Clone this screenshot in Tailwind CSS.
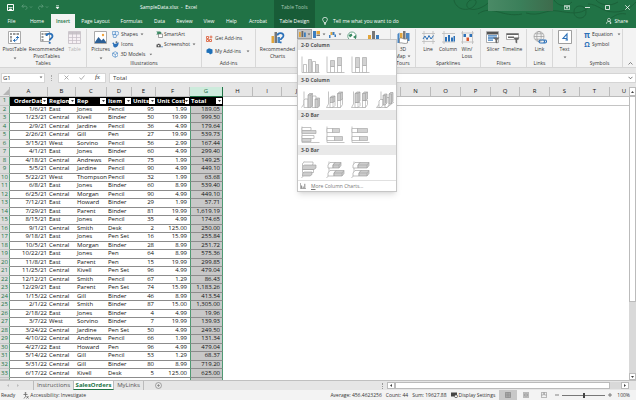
<!DOCTYPE html>
<html lang="en">
<head>
<meta charset="utf-8">
<title>SampleData.xlsx - Excel</title>
<script src="https://cdn.jsdelivr.net/npm/@tailwindcss/browser@4"></script>
</head>
<body class="h-screen overflow-hidden flex flex-col bg-[#e6e6e6] font-['Open_Sans',sans-serif] text-[5px] leading-[7px] text-[#333]">

<svg class="hidden" aria-hidden="true">
  <symbol id="caret" viewBox="0 0 4 3"><path d="M.6 .6h2.8L2 2.200z" fill="#666"/></symbol>
  <symbol id="cols" viewBox="0 0 19 17"><path d="M1 .5V16.500H18.500" fill="none" stroke="#aaa" stroke-width=".7"/><path d="M2.500 8.500h3v8h-3zM11.500 5.500h3v11h-3z" fill="#fff" stroke="#aaa" stroke-width=".7"/><path d="M7.500 3.500h3v13h-3zM14.500 8.500h3v8h-3z" fill="#d2d2d2" stroke="#aaa" stroke-width=".7"/></symbol>
  <symbol id="colstack" viewBox="0 0 19 17"><path d="M1 .5V16.500H18.500" fill="none" stroke="#aaa" stroke-width=".7"/><path d="M4.500 10.500h4v6h-4zM11.500 9.500h4v7h-4z" fill="#fff" stroke="#aaa" stroke-width=".7"/><path d="M4.500 4.500h4v6h-4zM11.500 1.500h4v8h-4z" fill="#d2d2d2" stroke="#aaa" stroke-width=".7"/></symbol>
  <symbol id="colfull" viewBox="0 0 19 17"><path d="M1 .5V16.500H18.500" fill="none" stroke="#aaa" stroke-width=".7"/><path d="M4.500 11.500h4v5h-4zM11.500 9.500h4v7h-4z" fill="#fff" stroke="#aaa" stroke-width=".7"/><path d="M4.500 1.500h4v10h-4zM11.500 1.500h4v8h-4z" fill="#d2d2d2" stroke="#aaa" stroke-width=".7"/></symbol>
  <symbol id="col3d" viewBox="0 0 19 17"><path d="M3 .5V13L.5 16.500M3 13h3" fill="none" stroke="#aaa" stroke-width=".7"/><path d="M3 9l1-1h3v8.500H3zM11 6l1-1h3v11.500h-4z" fill="#fff" stroke="#aaa" stroke-width=".7"/><path d="M7 4l1.500-1.500h3V15L10 16.500H7zM14 8.500L15.500 7h3v8L17 16.500h-3z" fill="#ccc" stroke="#999" stroke-width=".6"/><path d="M7 4h3v12M10 4l1.500-1.500M14 8.500h3v8" fill="none" stroke="#999" stroke-width=".5"/></symbol>
  <symbol id="col3dstack" viewBox="0 0 19 17"><path d="M2.500 .5V13L.5 16.500H14" fill="none" stroke="#aaa" stroke-width=".7"/><path d="M4 11.500l2-1.500h3v4.500l-2 2H4zM11.500 9.500l2-1.500h3v5.500l-2 3h-3z" fill="#fff" stroke="#aaa" stroke-width=".7"/><path d="M4 6.500L6 5h3v5L7 11.500H4zM11.500 2.500l2-1.500h3v7l-2 1.500h-3z" fill="#ccc" stroke="#999" stroke-width=".6"/><path d="M4 6.500h3v10M7 6.500L9 5M11.500 2.500h3v14M14.500 2.500l2-1.500" fill="none" stroke="#999" stroke-width=".5"/></symbol>
  <symbol id="col3dfull" viewBox="0 0 19 17"><path d="M2.500 .5V13L.5 16.500H14" fill="none" stroke="#aaa" stroke-width=".7"/><path d="M4 11.500h5v3l-2 2H4zM11.500 9.500h5v4l-2 3h-3z" fill="#fff" stroke="#aaa" stroke-width=".7"/><path d="M4 2.500L6 1h3v9l-2 1.500H4zM11.500 2.500l2-1.500h3v7l-2 1.500h-3z" fill="#ccc" stroke="#999" stroke-width=".6"/><path d="M4 2.500h3v14M7 2.500L9 1M11.500 2.500h3v14M14.500 2.500l2-1.500" fill="none" stroke="#999" stroke-width=".5"/></symbol>
  <symbol id="col3ddeep" viewBox="0 0 19 17"><path d="M5 .5V11L.5 16.500H11L18 11" fill="none" stroke="#aaa" stroke-width=".7"/><path d="M3 10l1.500-1.500h2.500V14L5 16.500H3zM9 8l1.500-1.500H13V14l-2 2.500H9z" fill="#fff" stroke="#999" stroke-width=".6"/><path d="M7 4.500L8.500 3H11v9l-2 2H7zM13 3l1.500-1.500H17V10l-2 3h-2z" fill="#ccc" stroke="#999" stroke-width=".6"/><path d="M7 4.500h2.500V12M13 3h2.500v10" fill="none" stroke="#999" stroke-width=".5"/></symbol>
  <symbol id="bars" viewBox="0 0 19 17"><path d="M1 .5V16.500H18.500" fill="none" stroke="#aaa" stroke-width=".7"/><path d="M1 1.500h9v3H1zM1 9.500h12v3H1z" fill="#fff" stroke="#aaa" stroke-width=".7"/><path d="M1 4.500h14v3H1zM1 12.500h9v3H1z" fill="#d2d2d2" stroke="#aaa" stroke-width=".7"/></symbol>
  <symbol id="barstack" viewBox="0 0 19 17"><path d="M1 .5V16.500H18.500" fill="none" stroke="#aaa" stroke-width=".7"/><path d="M1 2.500h6v4H1zM1 10.500h8v4H1z" fill="#fff" stroke="#aaa" stroke-width=".7"/><path d="M6.500 2.500h7v4h-7zM8.500 10.500h8v4h-8z" fill="#d2d2d2" stroke="#aaa" stroke-width=".7"/></symbol>
  <symbol id="barfull" viewBox="0 0 19 17"><path d="M1 .5V16.500H18.500" fill="none" stroke="#aaa" stroke-width=".7"/><path d="M1 2.500h6v4H1zM1 10.500h8v4H1z" fill="#fff" stroke="#aaa" stroke-width=".7"/><path d="M6.500 2.500h10v4h-10zM8.500 10.500h8v4h-8z" fill="#d2d2d2" stroke="#aaa" stroke-width=".7"/></symbol>
  <symbol id="bar3d" viewBox="0 0 19 17"><path d="M3 .5V14L.5 17" fill="none" stroke="#aaa" stroke-width=".7"/><path d="M1.500 2.500L3.500 1H12v2.500L10 5H1.500zM1.500 8.500h11v3H1.500z" fill="#fff" stroke="#999" stroke-width=".6"/><path d="M1.500 5.500L3.500 4H15v3l-2 1.500H1.500zM1.500 12.500L3.500 11H11v2.500L9 15H1.500z" fill="#ccc" stroke="#999" stroke-width=".6"/></symbol>
  <symbol id="bar3dstack" viewBox="0 0 19 17"><path d="M3 .5V14L.5 17" fill="none" stroke="#aaa" stroke-width=".7"/><path d="M2 4l2-2.500h5L7 4v3H2zM2 12l2-2.500h6L8 12v3H2z" fill="#fff" stroke="#999" stroke-width=".6"/><path d="M7 4l2-2.500h6v3L13 7H7zM8 12l2-2.500h8v3L16 15H8z" fill="#ccc" stroke="#999" stroke-width=".6"/><path d="M7 4h6v3M13 4l2-2.500M8 12h8v3M16 12l2-2.500" fill="none" stroke="#999" stroke-width=".5"/></symbol>
  <symbol id="bar3dfull" viewBox="0 0 19 17"><path d="M3 .5V14L.5 17" fill="none" stroke="#aaa" stroke-width=".7"/><path d="M2 4l2-2.500h5L7 4v3H2zM2 12l2-2.500h6L8 12v3H2z" fill="#fff" stroke="#999" stroke-width=".6"/><path d="M7 4l2-2.500h9v3L16 7H7zM8 12l2-2.500h8v3L16 15H8z" fill="#ccc" stroke="#999" stroke-width=".6"/><path d="M7 4h9v3M16 4l2-2.500M8 12h8v3M16 12l2-2.500" fill="none" stroke="#999" stroke-width=".5"/></symbol>
</svg>

<header class="relative flex bg-[#217346] text-white shrink-0 h-7">
  <svg class="absolute right-0 top-0 h-7 w-[190px]" viewBox="0 0 190 28" fill="none" stroke="#1b6139" stroke-width="1" aria-hidden="true"><path d="M8 0c2 10 14 12 20 6s-2-9-6-4 2 10 12 6 8-8 14-8M32 14c14-10 24 4 44 0M80 13c14 4 20-4 32-2s22 4 30-3M108 0c4 6 12 8 18 2M128 12c0-8 12-8 12 0s-12 8-12 0zM142 4c10 0 14 8 26 8s18-6 22-10M150 0c4 5 14 7 22 2M160 20c8-2 10-8 20-6"/></svg>
  <div class="relative flex flex-col w-[274px] shrink-0">
    <div class="flex items-center h-[14px] pl-[7px]">
      <button aria-label="Save"><svg class="size-[7px]" viewBox="0 0 7 7"><path d="M.5 .5h6v6h-6z" fill="none" stroke="#fff"/><path d="M1.500 3.500h4M2.500 5h2v1.500h-2z" stroke="#fff" stroke-width=".8" fill="#fff"/></svg></button>
      <button class="ml-[7px]" aria-label="Undo"><svg class="w-[12px] h-[6px]" viewBox="0 0 12 6" fill="none" stroke="#5c9b79" stroke-width=".9"><path d="M2.500 .5L.8 2.200l1.700 1.700M1 2.200h3.500c2 0 2 3 0 3.300M9 2.500l1 1 1-1"/></svg></button>
      <button class="ml-1" aria-label="Redo"><svg class="w-[12px] h-[6px]" viewBox="0 0 12 6" fill="none" stroke="#5c9b79" stroke-width=".9"><path d="M4.500 .5l1.700 1.700L4.500 3.900M6 2.200H3c-2 0-2 3 0 3.300M9 2.500l1 1 1-1"/></svg></button>
      <button class="ml-[6px]" aria-label="Customize toolbar"><svg class="w-[5px] h-[5px]" viewBox="0 0 5 5"><path d="M1 .5h3M1 2h3L2.500 4z" fill="#fff" stroke="#fff" stroke-width=".5"/></svg></button>
      <h1 class="ml-[80px]">SampleData.xlsx &nbsp;- &nbsp;Excel</h1>
    </div>
    <nav class="flex items-center h-[14px] whitespace-nowrap text-center">
      <a href="#" class="w-[23px]">File</a>
      <a href="#" class="w-[28px]">Home</a>
      <a href="#" class="w-[24px] h-full leading-[14px] bg-[#f3f3f3] text-[#217346] font-semibold">Insert</a>
      <a href="#" class="w-[41px]">Page Layout</a>
      <a href="#" class="w-[31px]">Formulas</a>
      <a href="#" class="w-[25px]">Data</a>
      <a href="#" class="w-[25px]">Review</a>
      <a href="#" class="w-[24px]">View</a>
      <a href="#" class="w-[21px]">Help</a>
      <a href="#" class="w-[32px]">Acrobat</a>
    </nav>
  </div>
  <div class="relative w-[41px] bg-[#185c37] text-center flex flex-col shrink-0">
    <span class="h-[14px] leading-[14px] text-[#a9cbb8]">Table Tools</span>
    <a href="#" class="h-[14px] leading-[14px]">Table Design</a>
  </div>
  <div class="relative flex-1 flex flex-col">
    <div class="flex h-[14px] items-center justify-end pr-[6px] gap-[15px]">
      <div class="self-start w-[65px] h-[11px] mr-[-4px] bg-linear-to-r from-[#4a8a66] via-[#3b7f5a] to-[#3e6b4c]"></div>
      <button aria-label="Ribbon display options"><svg class="w-[6px] h-[5px]" viewBox="0 0 6 5"><path d="M.4 .4h5.200v4.200H.4zM.4 1.400h5.200M3 4V2.200M2 3l1-.9L4 3" fill="none" stroke="#fff" stroke-width=".6"/></svg></button>
      <button aria-label="Minimize"><svg class="w-[5px] h-[5px]" viewBox="0 0 5 5"><path d="M0 2.500h5" stroke="#fff" stroke-width=".8"/></svg></button>
      <button aria-label="Restore"><svg class="w-[5px] h-[5px]" viewBox="0 0 5 5"><path d="M.5 .5h4v4h-4z" fill="none" stroke="#fff" stroke-width=".8"/></svg></button>
      <button aria-label="Close"><svg class="w-[5px] h-[5px]" viewBox="0 0 5 5"><path d="M.3 .3l4.400 4.400M4.700 .3L.3 4.700" stroke="#fff" stroke-width=".8"/></svg></button>
    </div>
    <div class="flex h-[14px] items-center pl-[7px] pr-2">
      <svg class="w-[6px] h-[8px]" viewBox="0 0 6 8" fill="none" stroke="#fff" stroke-width=".7"><path d="M2 5.500C2 4.500.6 4 .6 2.600a2.400 2.300 0 014.800 0C5.400 4 4 4.500 4 5.500zM2 6.500h2M2.300 7.500h1.400"/></svg>
      <a href="#" class="ml-[5px]">Tell me what you want to do</a>
      <a href="#" class="ml-auto flex items-center gap-[3px]"><svg class="size-[6px]" viewBox="0 0 6 6" fill="none" stroke="#fff" stroke-width=".6"><circle cx="3" cy="1.900" r="1.500"/><path d="M.4 5.800c0-1.500 1-2.400 2.600-2.400 1 0 1.600.3 2 .8M4.500 4v2M3.500 5h2"/></svg>Share</a>
    </div>
  </div>
</header>

<section class="flex shrink-0 h-10 bg-[#f3f3f3] pt-px text-center border-b border-[#d5d5d5]" aria-label="Insert ribbon">
  <div class="w-[87px] shrink-0 border-r border-[#d8d8d8] flex flex-col">
    <div class="flex flex-1">
      <button class="w-[29px] flex flex-col items-center"><svg class="mt-[2px] mb-[2px] w-[13px] h-[13px]" viewBox="0 0 13 13"><path d="M.5 .5h12v12H.5z" fill="#fff" stroke="#aaa"/><path d="M2 2h2v2H2zM5 2h2.500v2H5zM8.500 2H11v2H8.500zM2 5h2v2.500H2zM2 8.500h2V11H2z" fill="#999"/><path d="M5.500 9.500c3 .5 4.500-1 4-4M5.500 9.500l1.700-1.700M5.500 9.500l1.700 1.400M9.500 5.500L8 7M9.500 5.500L11 7" fill="none" stroke="#2b70b8" stroke-width="1"/></svg>PivotTable<svg class="w-1 h-[3px] mt-1"><use href="#caret"/></svg></button>
      <button class="w-[35px] flex flex-col items-center"><svg class="mt-[2px] mb-[2px] w-[14px] h-[13px]" viewBox="0 0 14 13"><path d="M.5 .5h9v10h-9z" fill="#fff" stroke="#aaa"/><path d="M1.500 2h2v2h-2zM4.500 2H7v2H4.500zM1.500 5h2v2h-2zM1.500 8h2v2h-2z" fill="#999"/><path d="M6.500 5c.2-3.200 6-3.200 6 .2 0 2.300-2.800 2.200-2.800 4.300M9.700 11v1.700" fill="none" stroke="#2b70b8" stroke-width="1.800"/></svg>Recommended<br>PivotTables</button>
      <button class="w-[21px] flex flex-col items-center text-[#b5b5b5]"><svg class="mt-[2px] mb-[2px] w-[13px] h-[13px]" viewBox="0 0 13 13"><path d="M.5 .5h12v12H.5z" fill="#f6f0f4" stroke="#c4bcc4" stroke-width=".8"/><path d="M.5 1h12v2.500H.5z" fill="#c9c4c9"/><path d="M4.500 1v11.500M8.500 1v11.500M.5 6.500h12M.5 9.500h12" stroke="#c4bcc4" stroke-width=".7"/></svg>Table</button>
    </div>
    <h2>Tables</h2>
  </div>
  <div class="w-[115px] shrink-0 border-r border-[#d8d8d8] flex flex-col">
    <div class="flex flex-1 pl-1">
      <button class="w-[19px] flex flex-col items-center"><svg class="mt-[2px] mb-[2px] w-[13px] h-[13px]" viewBox="0 0 13 13"><path d="M.5 .5h12v12H.5z" fill="#fff" stroke="#aaa"/><path d="M1 11l3.500-5 3 3.500 2-2L12 11v1H1z" fill="#2b5f96"/><circle cx="9" cy="4" r="1.200" fill="#f0a23c"/></svg>Pictures<svg class="w-1 h-[3px] mt-1"><use href="#caret"/></svg></button>
      <div class="w-[43px] pl-[2px] flex flex-col">
        <button class="h-[10px] flex items-center gap-[2px]"><svg class="size-[7px]" viewBox="0 0 7 7" fill="#eaf2fb" stroke="#3c7ebf" stroke-width=".6"><circle cx="4.700" cy="2.300" r="2"/><path d="M.4 .6h3v3h-3zM1 4.500l1.800-1.400L4.600 4.500 4 6.600H1.600z"/></svg>Shapes<svg class="w-1 h-[3px]"><use href="#caret"/></svg></button>
        <button class="h-[10px] flex items-center gap-[2px]"><svg class="size-[7px]" viewBox="0 0 7 7"><path d="M.3 2.500C1 1 2 1.600 2.500 3 4 2.500 5 3 6.500 1c.5 2-.5 5-3 5.600C1.500 6.800 1 5 1.200 3.300z" fill="#2b70b8"/><circle cx="4.500" cy="1.200" r="1" fill="#5c6f80"/></svg>Icons</button>
        <button class="h-[10px] flex items-center gap-[2px] whitespace-nowrap"><svg class="size-[7px]" viewBox="0 0 7 7" fill="#fff" stroke="#3c7ebf" stroke-width=".7"><path d="M3.500 .5l2.800 1.500v3L3.500 6.500.7 5V2zM.7 2l2.800 1.500L6.300 2M3.500 3.500v3"/></svg>3D Models<svg class="w-1 h-[3px] ml-[2px]"><use href="#caret"/></svg></button>
      </div>
      <div class="flex flex-col pl-[3px]">
        <button class="h-[10px] flex items-center gap-px"><svg class="size-[7px]" viewBox="0 0 7 7"><path d="M.2 .5h4l1.500 1.500-1.500 1.500h-4L1.500 2z" fill="#3b8a63"/><path d="M2.500 3h4v3.500h-4z" fill="#fff" stroke="#666" stroke-width=".6"/></svg>SmartArt</button>
        <button class="h-[10px] flex items-center gap-px"><svg class="size-[7px]" viewBox="0 0 7 7"><path d="M.5 3.500h1l.4-.8h1.500l.4.800h1v2.700H.5z" fill="#555"/><circle cx="2.600" cy="4.800" r=".8" fill="#fff"/><path d="M6 5v1.500M5.300 5.700h1.500" stroke="#2b70b8" stroke-width=".5"/></svg>Screenshot<svg class="w-1 h-[3px] ml-px"><use href="#caret"/></svg></button>
      </div>
    </div>
    <h2>Illustrations</h2>
  </div>
  <div class="w-[54px] shrink-0 border-r border-[#d8d8d8] flex flex-col">
    <div class="flex-1 pl-1 pt-[3px]">
      <button class="h-[12px] flex items-center gap-[2px]"><svg class="size-[7px]" viewBox="0 0 7 7" fill="none" stroke="#d9532c" stroke-width=".8"><path d="M.5 1.500h2v2h-2zM.5 4.500h2v2h-2zM3.500 4.500h2v2h-2zM5 .5v3M3.500 2h3"/></svg>Get Add-ins</button>
      <button class="h-[14px] flex items-center gap-[2px]"><svg class="size-[7px]" viewBox="0 0 7 7"><path d="M.5 1.800L3 .3l3.500 1.200v3.700L4 6.500 3 5 .5 4.800z" fill="#1d6fb8"/></svg>My Add-ins<svg class="w-1 h-[3px] ml-[3px]"><use href="#caret"/></svg></button>
    </div>
    <h2>Add-ins</h2>
  </div>
  <div class="w-[135px] shrink-0 border-r border-[#d8d8d8] flex">
    <button class="ml-1 w-[35px] flex flex-col items-center"><svg class="mt-[2px] mb-[2px] w-[14px] h-[13px]" viewBox="0 0 14 13"><path d="M.5 5h2.500v7H.5z" fill="#e2a53b"/><path d="M3.500 1H6v11H3.500z" fill="#777"/><path d="M6.500 6H9v6H6.500z" fill="#4a86c2"/><path d="M6.500 4.500c.2-3.200 6-3.200 6 .2 0 2.300-2.800 2.200-2.800 4.300M9.700 10.500v1.700" fill="none" stroke="#2b70b8" stroke-width="1.700"/></svg>Recommended<br>Charts</button>
    <div class="relative ml-[2px] h-[10px] z-10">
      <button class="w-[15px] h-[10px] flex items-center justify-center gap-px bg-[#c5c5c5] border border-[#a0a0a0]" aria-label="Insert column or bar chart" aria-expanded="true"><svg class="w-[7px] h-[6px]" viewBox="0 0 7 6"><path d="M0 1h1.800v5H0z" fill="#e2a53b"/><path d="M2.500 0h1.800v6H2.500z" fill="#666"/><path d="M5 1.500h1.800V6H5z" fill="#3c7ebf"/></svg><svg class="w-1 h-[3px]"><use href="#caret"/></svg></button>
      <div class="absolute left-0 top-full w-[100px] bg-white border border-[#c6c6c6] shadow-md text-left" role="menu">
        <h3 class="h-[10px] leading-[10px] pl-[3px] bg-[#e9e9e9] font-bold text-[#555]">2-D Column</h3>
        <div class="flex h-[25px] pt-1 pl-[3px] gap-[6px]">
          <button aria-label="Clustered column"><svg class="w-[19px] h-[17px]"><use href="#cols"/></svg></button><button aria-label="Stacked column"><svg class="w-[19px] h-[17px]"><use href="#colstack"/></svg></button><button aria-label="100% stacked column"><svg class="w-[19px] h-[17px]"><use href="#colfull"/></svg></button>
        </div>
        <h3 class="h-[10px] leading-[10px] pl-[3px] bg-[#e9e9e9] font-bold text-[#555]">3-D Column</h3>
        <div class="flex h-[25px] pt-1 pl-[3px] gap-[6px]">
          <button aria-label="3-D clustered column"><svg class="w-[19px] h-[17px]"><use href="#col3d"/></svg></button><button aria-label="3-D stacked column"><svg class="w-[19px] h-[17px]"><use href="#col3dstack"/></svg></button><button aria-label="3-D 100% stacked column"><svg class="w-[19px] h-[17px]"><use href="#col3dfull"/></svg></button><button aria-label="3-D column"><svg class="w-[19px] h-[17px]"><use href="#col3ddeep"/></svg></button>
        </div>
        <h3 class="h-[10px] leading-[10px] pl-[3px] bg-[#e9e9e9] font-bold text-[#555]">2-D Bar</h3>
        <div class="flex h-[25px] pt-1 pl-[3px] gap-[6px]">
          <button aria-label="Clustered bar"><svg class="w-[19px] h-[17px]"><use href="#bars"/></svg></button><button aria-label="Stacked bar"><svg class="w-[19px] h-[17px]"><use href="#barstack"/></svg></button><button aria-label="100% stacked bar"><svg class="w-[19px] h-[17px]"><use href="#barfull"/></svg></button>
        </div>
        <h3 class="h-[10px] leading-[10px] pl-[3px] bg-[#e9e9e9] font-bold text-[#555]">3-D Bar</h3>
        <div class="flex h-[25px] pt-1 pl-[3px] gap-[6px]">
          <button aria-label="3-D clustered bar"><svg class="w-[19px] h-[17px]"><use href="#bar3d"/></svg></button><button aria-label="3-D stacked bar"><svg class="w-[19px] h-[17px]"><use href="#bar3dstack"/></svg></button><button aria-label="3-D 100% stacked bar"><svg class="w-[19px] h-[17px]"><use href="#bar3dfull"/></svg></button>
        </div>
        <button class="flex w-full items-center h-[11px] pl-[2px] gap-[5px] border-t border-[#e0e0e0] text-[#777]"><svg class="size-[6px]" viewBox="0 0 6 6"><path d="M.4 0v5.600H6" fill="none" stroke="#888" stroke-width=".7"/><path d="M1.600 2.500v3M3.200 3.500v2M4.800 .8v4.700" stroke="#888"/></svg><span><u>M</u>ore Column Charts...</span></button>
      </div>
    </div>
    <div class="flex items-start pt-[2px] pl-px gap-[3px]">
      <button class="flex items-center gap-[2px]" aria-label="Insert hierarchy chart"><svg class="size-[7px]" viewBox="0 0 7 7"><path d="M0 0h3v7H0z" fill="#3c7ebf"/><path d="M3.500 0H7v3H3.500z" fill="#e2a53b"/><path d="M3.500 3.500H7V5H3.500z" fill="#777"/></svg><svg class="w-1 h-[3px]"><use href="#caret"/></svg></button>
      <button class="flex items-center gap-[2px]" aria-label="Insert waterfall chart"><svg class="size-[7px]" viewBox="0 0 7 7"><path d="M0 4h1.500v3H0zM5.500 3.500H7V6H5.500z" fill="#3c7ebf"/><path d="M1.500 1h2v3h-2z" fill="#e2a53b"/><path d="M3.500 1h2v3h-2z" fill="#3c7ebf"/></svg><svg class="w-1 h-[3px]"><use href="#caret"/></svg></button>
    </div>
    <button class="ml-[5px] h-[10px] pt-[2px] overflow-hidden" aria-label="Maps"><svg class="w-[10px] h-[10px]" viewBox="0 0 10 10"><circle cx="5" cy="5.200" r="4.200" fill="#fff" stroke="#5e9b80" stroke-width=".9"/><path d="M1.500 4l3-1.500 1 2L3 6.500zM6 6l3-2v4z" fill="#3b8a63"/></svg></button>
    <button class="ml-[10px] h-[10px] pt-[2px] overflow-hidden" aria-label="PivotChart"><svg class="w-[13px] h-[9px]" viewBox="0 0 13 9"><path d="M1 4h3v5H1z" fill="#e2a53b"/><path d="M5 0h3v9H5z" fill="#777"/><path d="M9 4h3v5H9z" fill="#3c7ebf"/></svg></button>
  </div>
  <div class="w-[25px] shrink-0 border-r border-[#d8d8d8] flex flex-col">
    <button class="flex-1 flex flex-col items-center"><svg class="mt-[2px] mb-[2px] w-[13px] h-[13px]" viewBox="0 0 13 13"><path d="M.5 3l2-1.500V12H.5z" fill="#4a86c2"/><path d="M3 2h2.500v9H3z" fill="#e2a53b"/><path d="M6 0h2.500v10H6z" fill="#777"/><path d="M9 2h3.500v8H9z" fill="#4a86c2"/><path d="M2.500 7.500c2-2 4 2 8 0V12c-3 1.500-6-1-8 0z" fill="#fff" stroke="#777" stroke-width=".7"/></svg>3D<span class="flex items-center gap-px">Map<svg class="w-1 h-[3px]"><use href="#caret"/></svg></span></button>
    <h2>Tours</h2>
  </div>
  <div class="w-[65px] shrink-0 border-r border-[#d8d8d8] flex flex-col">
    <div class="flex flex-1 pl-[2px]">
      <button class="w-[20px] flex flex-col items-center"><svg class="mt-[2px] mb-[2px] w-[13px] h-[13px]" viewBox="0 0 13 13" fill="none"><path d="M2 0v13M11 0v13M0 2.500h13M0 10.500h13" stroke="#bbb" stroke-width=".8"/><path d="M1 8l2-3 2 3.500 2-4L9 8l2.500-3.500" stroke="#2b70b8"/></svg>Line</button>
      <button class="w-[20px] flex flex-col items-center"><svg class="mt-[2px] mb-[2px] w-[13px] h-[13px]" viewBox="0 0 13 13"><path d="M2 0v13M0 2.500h13M0 11h13" stroke="#bbb" stroke-width=".8"/><path d="M3 6h2v4.500H3zM6 4h2v6.500H6zM9 6.500h2v4H9zM11.500 5H13v5.500h-1.500z" fill="#2b70b8"/></svg>Column</button>
      <button class="w-[18px] flex flex-col items-center"><svg class="mt-[2px] mb-[2px] w-[13px] h-[13px]" viewBox="0 0 13 13"><path d="M1.500 0v13M11.500 0v13M0 2h13M0 11h13" stroke="#bbb" stroke-width=".8"/><path d="M2.500 3h2.500v3H2.500zM8.500 3h2.500v3H8.500z" fill="#2b70b8"/><path d="M5.500 6.500H8v3.500H5.500z" fill="#d9532c"/></svg>Win/<br>Loss</button>
    </div>
    <h2>Sparklines</h2>
  </div>
  <div class="w-[46px] shrink-0 border-r border-[#d8d8d8] flex flex-col">
    <div class="flex flex-1 pl-[3px]">
      <button class="w-[18px] flex flex-col items-center"><svg class="mt-[2px] mb-[2px] w-[14px] h-[13px]" viewBox="0 0 14 13"><path d="M.5 .5h12v11H.5z" fill="#fff" stroke="#999" stroke-width=".8"/><path d="M1 1h11v2.500H1z" fill="#555"/><path d="M2 4.800h9M2 7h9M2 9.200h5" stroke="#3c7ebf" stroke-width="1.300"/><path d="M7 6.500h6.500L11.200 9v3.500l-1.700-1V9z" fill="#666"/></svg>Slicer</button>
      <button class="w-[21px] flex flex-col items-center"><svg class="mt-[2px] mb-[2px] w-[14px] h-[13px]" viewBox="0 0 14 13"><path d="M.5 2.500h12v6H.5z" fill="#fff" stroke="#999" stroke-width=".8"/><path d="M.5 2.500h12v1.500H.5zM2 5.500h6V7H2z" fill="#666"/><path d="M7 6.500h6.500L11.200 9v3.500l-1.700-1V9z" fill="#666"/></svg>Timeline</button>
    </div>
    <h2>Filters</h2>
  </div>
  <div class="w-[26px] shrink-0 border-r border-[#d8d8d8] flex flex-col">
    <button class="flex-1 flex flex-col items-center"><svg class="mt-[2px] mb-[2px] w-[14px] h-[13px]" viewBox="0 0 14 13" fill="none"><g stroke="#999" stroke-width=".7"><circle cx="6" cy="5.500" r="5"/><ellipse cx="6" cy="5.500" rx="2.200" ry="5"/><path d="M1 5.500h10M2 2.800h8M2 8.200h5"/></g><path d="M7.500 9h2.500a1.500 1.500 0 010 3H7.500a1.500 1.500 0 010-3zM10 9h2a1.500 1.500 0 010 3h-2" stroke="#2b70b8" stroke-width="1.100"/></svg>Link</button>
    <h2>Links</h2>
  </div>
  <div class="w-[24px] shrink-0 border-r border-[#d8d8d8] flex flex-col">
    <button class="flex flex-col items-center"><svg class="mt-px mb-[2px] w-[14px] h-[14px]" viewBox="0 0 14 14"><path d="M.5 .5h13v13H.5z" fill="#fff" stroke="#888" stroke-width=".8"/><path d="M9 10V4L5 8.500h4.500M7.500 10H10" fill="none" stroke="#2b70b8" stroke-width="1.100"/></svg>Text<svg class="w-1 h-[3px] mt-[3px]"><use href="#caret"/></svg></button>
  </div>
  <div class="w-[46px] shrink-0 border-r border-[#d8d8d8] flex flex-col">
    <div class="flex-1 pl-[7px]">
      <button class="h-[10px] flex items-center gap-[2px]"><span class="w-[6px] text-[8px] font-bold text-[#2b70b8]">π</span>Equation<svg class="w-1 h-[3px] ml-[2px]"><use href="#caret"/></svg></button>
      <button class="h-[10px] flex items-center gap-[2px]"><span class="w-[6px] text-[7px] font-bold text-[#2b70b8]">Ω</span>Symbol</button>
    </div>
    <h2>Symbols</h2>
  </div>
  <button class="ml-auto self-end mr-[3px] mb-[2px]" aria-label="Collapse ribbon"><svg class="w-[5px] h-[3px]" viewBox="0 0 5 3"><path d="M.5 2.500l2-2 2 2" fill="none" stroke="#555" stroke-width=".7"/></svg></button>
</section>

<section class="flex shrink-0 h-[19px] items-center pl-px" aria-label="Formula bar">
  <div class="flex h-[10px] w-[44px] items-center bg-white border border-[#d5d5d5]">
    <input aria-label="Name box" value="G1" class="min-w-0 flex-1 h-2 pl-px text-[6px]"><svg class="w-1 h-[3px] mr-px"><use href="#caret"/></svg>
  </div>
  <span class="mx-[6px] w-px h-[6px] border-l border-dotted border-[#aaa]"></span>
  <div class="flex h-[10px] w-[48px] items-center justify-around bg-white border border-[#d5d5d5]">
    <button aria-label="Cancel"><svg class="size-[5px]" viewBox="0 0 5 5"><path d="M.5 .5l4 4M4.500 .5l-4 4" stroke="#999" stroke-width=".8"/></svg></button>
    <button aria-label="Enter"><svg class="w-[6px] h-[5px]" viewBox="0 0 6 5"><path d="M.5 2.500l1.700 2 3.300-4" fill="none" stroke="#999" stroke-width=".8"/></svg></button>
    <button aria-label="Insert function" class="font-['Liberation_Serif',serif] italic text-[7px]">fx</button>
  </div>
  <div class="ml-[3px] flex flex-1 h-[10px] items-center bg-white border border-[#d5d5d5]">
    <input aria-label="Formula" value="Total" class="min-w-0 flex-1 h-2 pl-[3px] text-[6px]">
    <svg class="w-[5px] h-[4px] mr-[2px]" viewBox="0 0 5 4"><path d="M.5 .8l2 2 2-2" fill="none" stroke="#555" stroke-width=".8"/></svg>
  </div>
</section>

<main class="flex flex-1 min-h-0">
  <div class="flex-1 min-w-0 overflow-hidden bg-white">
    <table class="table-fixed w-[639px] h-full border-separate border-spacing-0 text-[6px] leading-[7px] text-[#111]">
      <thead><tr id="letters" class="h-[10px]"></tr></thead>
      <tbody id="rows"></tbody>
    </table>
  </div>
  <div class="w-[7px] shrink-0 flex flex-col bg-[#d9d9d9]" aria-hidden="true">
    <div class="h-[9px] bg-white border border-[#bbb] flex items-center justify-center"><svg class="w-[3px] h-[2px]" viewBox="0 0 3 2"><path d="M0 2h3L1.500 0z" fill="#444"/></svg></div>
    <div class="flex-1 bg-white border border-[#bbb]"></div>
    <div class="h-[71px]"></div>
    <div class="h-[7px] bg-white border border-[#bbb] flex items-center justify-center"><svg class="w-[3px] h-[2px]" viewBox="0 0 3 2"><path d="M0 0h3L1.500 2z" fill="#444"/></svg></div>
  </div>
</main>

<section class="flex shrink-0 h-[10px] items-center border-t border-[#c0c0c0] text-[6px] text-[#555]" aria-label="Sheets">
  <div class="w-[34px] h-full border-r border-[#bbb] flex items-center gap-2 pl-[7px]"><svg class="w-[2px] h-[3px]" viewBox="0 0 2 3"><path d="M2 0v3L0 1.500z" fill="#bbb"/></svg><svg class="w-[2px] h-[3px]" viewBox="0 0 2 3"><path d="M0 0v3l2-1.500z" fill="#bbb"/></svg></div>
  <a href="#" class="w-[39px] text-center">Instructions</a>
  <a href="#" class="w-[41px] h-full leading-[8px] text-center bg-white border-x border-b border-x-[#bbb] border-b-[#217346] text-[#217346] font-bold">SalesOrders</a>
  <a href="#" class="w-[30px] h-full leading-[9px] text-center border-r border-[#bbb]">MyLinks</a>
  <button class="ml-[11px]" aria-label="New sheet"><svg class="size-[7px]" viewBox="0 0 7 7" fill="none" stroke="#777" stroke-width=".6"><circle cx="3.500" cy="3.500" r="3"/><path d="M3.500 2v3M2 3.500h3"/></svg></button>
  <span class="ml-auto w-px h-[6px] border-l border-dotted border-[#999]"></span>
  <div class="ml-1 w-[242px] h-[7px] flex bg-[#d9d9d9]" aria-hidden="true">
    <div class="w-2 bg-white border border-[#bbb] flex items-center justify-center"><svg class="w-[2px] h-[3px]" viewBox="0 0 2 3"><path d="M2 0v3L0 1.500z" fill="#444"/></svg></div>
    <div class="flex-1 bg-white border border-[#bbb]"></div>
    <div class="w-[11px]"></div>
    <div class="w-2 bg-white border border-[#bbb] flex items-center justify-center"><svg class="w-[2px] h-[3px]" viewBox="0 0 2 3"><path d="M0 0v3l2-1.500z" fill="#444"/></svg></div>
  </div>
  <span class="w-[7px]"></span>
</section>

<footer class="flex shrink-0 h-[10px] items-center bg-[#f3f3f3] pl-px pr-[6px] whitespace-nowrap">
  <span>Ready</span>
  <button class="ml-2 flex items-center gap-px"><svg class="w-[6px] h-[7px]" viewBox="0 0 6 7" fill="none" stroke="#555" stroke-width=".7"><circle cx="2.500" cy="1" r=".6"/><path d="M.5 2.500h4M2.500 2.500v2L1 6.500M3.500 4l2 2.500M5.500 4l-2 2.500"/></svg>Accessibility: Investigate</button>
  <span class="ml-auto">Average: 456.4623256</span>
  <span class="ml-1">Count: 44</span>
  <span class="ml-1">Sum: 19627.88</span>
  <button class="ml-1 flex items-center gap-px"><svg class="w-[7px] h-[6px]" viewBox="0 0 7 6"><path d="M0 .5h6v4H0z" fill="#444"/><circle cx="5" cy="4.200" r="1.500" fill="#fff" stroke="#444" stroke-width=".7"/></svg>Display Settings</button>
  <button class="ml-1 w-[18px] h-full bg-[#c8c8c8] flex items-center justify-center" aria-label="Normal view"><svg class="size-[6px]" viewBox="0 0 6 6" fill="none" stroke="#777" stroke-width=".6"><path d="M.4 .4h5.200v5.200H.4zM.4 2.100h5.200M.4 3.900h5.200M2.100 .4v5.200M3.900 .4v5.200"/></svg></button>
  <button class="ml-[6px]" aria-label="Page layout view"><svg class="size-[6px]" viewBox="0 0 6 6" fill="none" stroke="#888" stroke-width=".6"><path d="M.4 .4h5.200v5.200H.4zM1.500 1.500h3v3h-3zM1.500 2.500h3M1.500 3.500h3"/></svg></button>
  <button class="ml-3" aria-label="Page break preview"><svg class="size-[6px]" viewBox="0 0 6 6" fill="none" stroke="#888" stroke-width=".6"><path d="M.4 .4h5.200v5.200H.4zM.4 3h2v-2.500M3.500 .5V3h2"/></svg></button>
  <button class="ml-2" aria-label="Zoom out"><svg class="size-[4px]" viewBox="0 0 4 4"><path d="M0 2h4" stroke="#555" stroke-width=".7"/></svg></button>
  <input type="range" aria-label="Zoom" min="0" max="100" value="50" class="mx-[3px] w-[43px] h-[5px] appearance-none bg-transparent [&::-webkit-slider-runnable-track]:h-px [&::-webkit-slider-runnable-track]:bg-[#777] [&::-webkit-slider-thumb]:appearance-none [&::-webkit-slider-thumb]:w-[2px] [&::-webkit-slider-thumb]:h-[5px] [&::-webkit-slider-thumb]:-mt-[2px] [&::-webkit-slider-thumb]:bg-[#444]">
  <button aria-label="Zoom in"><svg class="size-[4px]" viewBox="0 0 4 4"><path d="M0 2h4M2 0v4" stroke="#555" stroke-width=".7"/></svg></button>
  <span class="ml-[5px]">100%</span>
</footer>

<script>
const data = `1/6/21|East|Jones|Pencil|95|1.99|189.05
1/23/21|Central|Kivell|Binder|50|19.99|999.50
2/9/21|Central|Jardine|Pencil|36|4.99|179.64
2/26/21|Central|Gill|Pen|27|19.99|539.73
3/15/21|West|Sorvino|Pencil|56|2.99|167.44
4/1/21|East|Jones|Binder|60|4.99|299.40
4/18/21|Central|Andrews|Pencil|75|1.99|149.25
5/5/21|Central|Jardine|Pencil|90|4.99|449.10
5/22/21|West|Thompson|Pencil|32|1.99|63.68
6/8/21|East|Jones|Binder|60|8.99|539.40
6/25/21|Central|Morgan|Pencil|90|4.99|449.10
7/12/21|East|Howard|Binder|29|1.99|57.71
7/29/21|East|Parent|Binder|81|19.99|1,619.19
8/15/21|East|Jones|Pencil|35|4.99|174.65
9/1/21|Central|Smith|Desk|2|125.00|250.00
9/18/21|East|Jones|Pen Set|16|15.99|255.84
10/5/21|Central|Morgan|Binder|28|8.99|251.72
10/22/21|East|Jones|Pen|64|8.99|575.36
11/8/21|East|Parent|Pen|15|19.99|299.85
11/25/21|Central|Kivell|Pen Set|96|4.99|479.04
12/12/21|Central|Smith|Pencil|67|1.29|86.43
12/29/21|East|Parent|Pen Set|74|15.99|1,183.26
1/15/22|Central|Gill|Binder|46|8.99|413.54
2/1/22|Central|Smith|Binder|87|15.00|1,305.00
2/18/22|East|Jones|Binder|4|4.99|19.96
3/7/22|West|Sorvino|Binder|7|19.99|139.93
3/24/22|Central|Jardine|Pen Set|50|4.99|249.50
4/10/22|Central|Andrews|Pencil|66|1.99|131.34
4/27/22|East|Howard|Pen|96|4.99|479.04
5/14/22|Central|Gill|Pencil|53|1.29|68.37
5/31/22|Central|Gill|Binder|80|8.99|719.20
6/17/22|Central|Kivell|Desk|5|125.00|625.00`.split('\n').map(r => r.split('|'));

const widths = ['w-[38px]','w-[28px]','w-[31px]','w-[25px]','w-[24px]','w-[34px]','w-[33px]'];
const wide = i => (i % 4 === 0 ? 'w-[29px]' : 'w-[30px]');
let head = '<th class="w-[10px] h-[10px] bg-[#e6e6e6] border-r border-b border-[#bbb]"><svg class="w-[6px] h-[6px] ml-[3px]" viewBox="0 0 6 6" aria-hidden="true"><path d="M6 0v6H0z" fill="#b5b5b5"/></svg></th>';
[...'ABCDEFGHIJKLMNOPQRSTU'].forEach((l, i) => {
  const w = i < 7 ? widths[i] : wide(i);
  const tone = l === 'G' ? 'bg-[#cdebdc] text-[#217346] border-[#217346]' : 'bg-[#e6e6e6] border-[#bbb]';
  head += `<th scope="col" class="${w} h-[10px] border-r border-b font-normal text-center ${tone}">${l}</th>`;
});
document.getElementById('letters').innerHTML = head;

const rowHead = n => `<th scope="row" class="bg-[#dcdcdc] text-[#217346] font-normal text-center border-r border-r-[#5fa47f] border-b border-b-[#c4c4c4]">${n}</th>`;
const titles = ['OrderDat','Region','Rep','Item','Units','Unit Cost','Total'];
let body = '<tr>' + rowHead(1) + titles.map((t, i) =>
  `<th scope="col" class="bg-black text-white font-bold whitespace-nowrap"><span class="flex items-center justify-between"><span class="${i === 0 ? 'pl-1' : 'pl-px'}">${t}</span><button aria-label="Filter ${t}" class="w-[6px] h-[6px] mr-px bg-white flex items-center justify-center"><svg class="w-[3px] h-[2px]" viewBox="0 0 3 2"><path d="M0 0h3L1.500 2z" fill="#333"/></svg></button></span></th>`
).join('') + '<td colspan="14" class="border-b border-[#c4c4c4]"></td></tr>';

const align = ['text-right pr-px','pl-px','pl-px','pl-px','text-right pr-[2px]','text-right pr-[3px]','text-right pr-[2px] bg-[#c8c8c8] border-r border-l border-x-[#4f9a73]'];
data.forEach((r, n) => {
  body += '<tr>' + rowHead(n + 2) + r.map((v, i) => `<td class="border-b border-b-[#8c8c8c] whitespace-nowrap ${align[i]}">${v}</td>`).join('') + '</tr>';
});
body += '<tr class="h-[2px]">' + rowHead('') + align.map(a => `<td class="${a}"></td>`).join('') + '</tr>';
document.getElementById('rows').innerHTML = body;
</script>
</body>
</html>
